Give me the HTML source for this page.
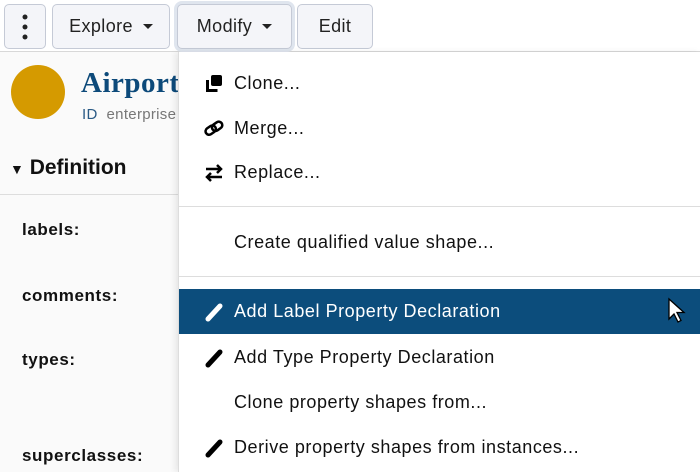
<!DOCTYPE html>
<html><head><meta charset="utf-8"><style>
*{box-sizing:border-box;margin:0;padding:0}
body{width:700px;height:466px;overflow:hidden;background:#fafafa;font-family:"Liberation Sans",sans-serif;position:relative;color:#111}
.top{position:absolute;left:0;top:0;width:700px;height:52px;background:#fff;border-bottom:1px solid #d8d8d8}
.btn{position:absolute;top:4px;height:45px;border:1px solid #c5cad6;border-radius:5px;background:#f4f5f9;font-size:18px;letter-spacing:.4px;color:#222;display:flex;align-items:center;justify-content:center}
.car{display:inline-block;width:0;height:0;border-left:5px solid transparent;border-right:5px solid transparent;border-top:5px solid #222;margin-left:10px;vertical-align:middle}
.av{position:absolute;left:11px;top:65px;width:54px;height:54px;border-radius:50%;background:#d59a00}
.ttl{position:absolute;left:81px;top:67px;font-family:"Liberation Serif",serif;font-weight:bold;font-size:29px;color:#0d4a7a;letter-spacing:.5px}
.id{position:absolute;left:82px;top:106px;font-size:15px;color:#777;letter-spacing:.3px}
.id b{color:#2a5a85;font-weight:normal}
.def{position:absolute;left:10px;top:156px;font-size:21px;font-weight:bold}
.hr{position:absolute;left:0;top:194px;width:178px;border-top:1px solid #ddd}
.lab{position:absolute;left:22px;font-size:17px;font-weight:bold;letter-spacing:.6px}
.menu{position:absolute;left:178px;top:52px;width:522px;height:420px;background:#fff;border-left:1px solid #ddd;box-shadow:-3px 0 6px rgba(0,0,0,.08)}
.it{position:absolute;left:0;width:521px;height:45px;display:flex;align-items:center;padding-left:55px;font-size:18px;letter-spacing:.55px;color:#111}
.ic{position:absolute;left:24px;top:13px;width:22px;height:20px}
.sep{position:absolute;left:0;width:521px;border-top:1px solid #ddd}
</style></head><body>
<div class="top"></div>
<div class="btn" style="left:4px;width:42px"><svg width="6" height="28"><circle cx="3" cy="4" r="2.5" fill="#222"/><circle cx="3" cy="14" r="2.5" fill="#222"/><circle cx="3" cy="24" r="2.5" fill="#222"/></svg></div>
<div class="btn" style="left:52px;width:118px">Explore<span class="car"></span></div>
<div class="btn" style="left:177px;width:115px;box-shadow:0 0 0 3px #dfe5ee">Modify<span class="car"></span></div>
<div class="btn" style="left:297px;width:76px">Edit</div>
<div class="av"></div>
<div class="ttl">Airport</div>
<div class="id"><b>ID</b>&nbsp; enterprise</div>
<div class="def"><span style="font-size:14px">▼</span>&nbsp;Definition</div>
<div class="hr"></div>
<div class="lab" style="top:220px">labels:</div>
<div class="lab" style="top:286px">comments:</div>
<div class="lab" style="top:350px">types:</div>
<div class="lab" style="top:446px">superclasses:</div>
<div class="menu">
<div class="it" style="top:9px"><svg class="ic" viewBox="0 0 22 20"><rect x="8" y="1" width="11" height="11" rx="2" fill="#000"/><path d="M4.5 6v10.5h10" stroke="#000" stroke-width="3" fill="none"/></svg>Clone...</div>
<div class="it" style="top:54px"><svg class="ic" viewBox="0 0 22 20"><g stroke="#000" stroke-width="2.5" fill="none"><rect x="2" y="8" width="11" height="7" rx="3.5" transform="rotate(-35 7 11)"/><rect x="9" y="4" width="11" height="7" rx="3.5" transform="rotate(-35 14 8)"/></g></svg>Merge...</div>
<div class="it" style="top:98px"><svg class="ic" viewBox="0 0 22 20"><g stroke="#000" stroke-width="2.5" fill="none"><path d="M3 6h15M14 2l4 4-4 4M19 14H4M8 10l-4 4 4 4"/></g></svg>Replace...</div>
<div class="sep" style="top:154px"></div>
<div class="it" style="top:168px">Create qualified value shape...</div>
<div class="sep" style="top:224px"></div>
<div class="it" style="top:237px;background:#0c4d7c;color:#fff"><svg class="ic" viewBox="0 0 22 20"><path d="M5 17L17 4" stroke="#fff" stroke-width="5" stroke-linecap="round"/></svg>Add Label Property Declaration<svg style="position:absolute;left:488px;top:8px" width="20" height="28" viewBox="0 0 20 28"><path d="M2 2v20l5-5 4 8 3-1.5-4-8h7z" fill="#fff" stroke="#000" stroke-width="1.3"/></svg></div>
<div class="it" style="top:283px"><svg class="ic" viewBox="0 0 22 20"><path d="M5 17L17 4" stroke="#000" stroke-width="5" stroke-linecap="round"/></svg>Add Type Property Declaration</div>
<div class="it" style="top:328px">Clone property shapes from...</div>
<div class="it" style="top:373px"><svg class="ic" viewBox="0 0 22 20"><path d="M5 17L17 4" stroke="#000" stroke-width="5" stroke-linecap="round"/></svg>Derive property shapes from instances...</div>
</div>
</body></html>
